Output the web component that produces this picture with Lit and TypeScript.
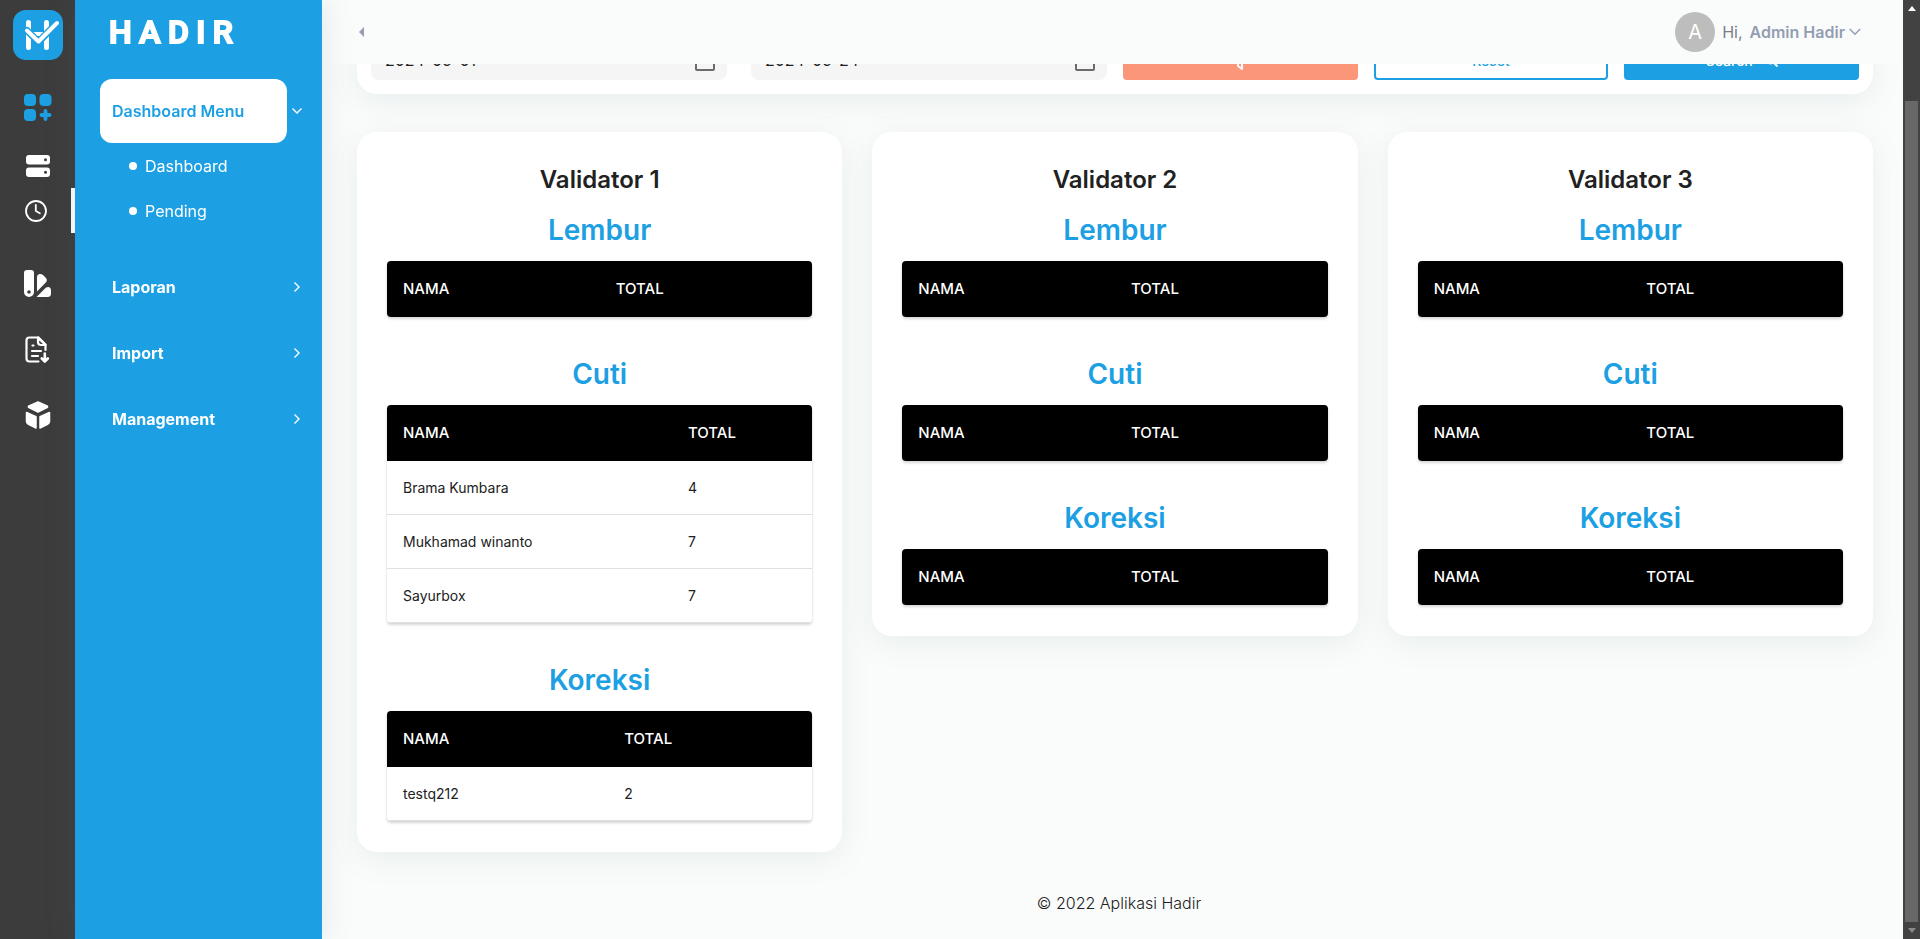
import { LitElement, html, css } from "lit";
import { customElement } from "lit/decorators.js";

interface Row { name: string; total: number }
interface Section { title: string; cols: string; rows: Row[] }

const even = "even";
const validators: { title: string; sections: Section[] }[] = [
  {
    title: "Validator 1",
    sections: [
      { title: "Lembur", cols: even, rows: [] },
      {
        title: "Cuti",
        cols: "wide",
        rows: [
          { name: "Brama Kumbara", total: 4 },
          { name: "Mukhamad winanto", total: 7 },
          { name: "Sayurbox", total: 7 },
        ],
      },
      { title: "Koreksi", cols: "medium", rows: [{ name: "testq212", total: 2 }] },
    ],
  },
  ...[2, 3].map((n) => ({
    title: `Validator ${n}`,
    sections: ["Lembur", "Cuti", "Koreksi"].map((title) => ({ title, cols: even, rows: [] as Row[] })),
  })),
];

@customElement("validator-card")
class ValidatorCard extends LitElement {
  static properties = { data: { attribute: false } };
  declare data: { title: string; sections: Section[] };

  static styles = css`
    :host {
      display: block;
      box-sizing: border-box;
      background: #fff;
      border-radius: 20px;
      padding: 30px 30px 31px;
      box-shadow: 0 7px 30px rgba(90, 114, 123, 0.11);
    }
    .title {
      margin: 0 0 16px;
      font-size: 24px;
      line-height: 35px;
      font-weight: 600;
      color: #212121;
      text-align: center;
    }
    .sections { display: flex; flex-direction: column; gap: 40px; }
    .name {
      margin: 0 0 14px;
      font-size: 28px;
      line-height: 34px;
      font-weight: 600;
      color: #1ca0e3;
      text-align: center;
    }
    table {
      width: 100%;
      table-layout: fixed;
      border-collapse: separate;
      border-spacing: 0;
      border-radius: 4px;
      overflow: hidden;
      box-shadow: 0 2px 3px rgba(0, 0, 0, 0.16), 0 0 1px rgba(0, 0, 0, 0.14);
    }
    th {
      box-sizing: border-box;
      background: #000;
      color: #fff;
      text-align: left;
      font-weight: 500;
      font-size: 15px;
      line-height: 24px;
      padding: 16px;
    }
    .even { width: 50%; }
    .wide { width: 67%; }
    .medium { width: 52%; }
    td {
      height: 54px;
      box-sizing: border-box;
      font-size: 14px;
      line-height: 20px;
      color: #212121;
      padding: 16px;
      border-bottom: 1px solid #e0e0e0;
    }
  `;

  render() {
    return html`
      <h2 class="title">${this.data.title}</h2>
      <div class="sections">
        ${this.data.sections.map(
          (s) => html`<section>
            <h3 class="name">${s.title}</h3>
            <table>
              <thead>
                <tr><th class=${s.cols} scope="col">NAMA</th><th scope="col">TOTAL</th></tr>
              </thead>
              <tbody>
                ${s.rows.map((r) => html`<tr><td>${r.name}</td><td>${r.total}</td></tr>`)}
              </tbody>
            </table>
          </section>`
        )}
      </div>
    `;
  }
}

const chevronRight = html`<svg width="8" height="12" viewBox="0 0 8 12" fill="none" stroke="#fff" stroke-width="1.4"><path d="M1.500 1.500 6 6l-4.500 4.500" /></svg>`;
const calendar = html`<svg width="24" height="24" viewBox="0 0 24 24" fill="#6b6b6b"><path d="M20 3h-1V1h-2v2H7V1H5v2H4c-1.100 0-2 .9-2 2v16c0 1.100.9 2 2 2h16c1.100 0 2-.9 2-2V5c0-1.100-.9-2-2-2zm0 18H4V8h16v13z" /></svg>`;

@customElement("app-root")
class AppRoot extends LitElement {
  static styles = css`
    :host {
      display: block;
      font-family: "Inter", "Liberation Sans", sans-serif;
      color: #212121;
    }
    a { color: inherit; text-decoration: none; }
    button { font: inherit; cursor: pointer; }
    svg { display: block; flex: none; }
    .app { display: flex; height: 100vh; overflow: hidden; background: #fafcfb; }
    .rail {
      width: 75px;
      flex: none;
      background: #3c3c3c;
      display: flex;
      flex-direction: column;
      align-items: center;
      padding-top: 10px;
      box-sizing: border-box;
    }
    .rail a { display: flex; width: 100%; align-items: center; justify-content: center; box-sizing: border-box; }
    .logo { height: 50px; margin-bottom: 14px; }
    .tall { height: 66px; }
    .first { margin-bottom: 3px; }
    .short { height: 45px; }
    .active { border-right: 4px solid #fff; margin-bottom: 17px; }
    .side {
      width: 247px;
      flex: none;
      box-sizing: border-box;
      background: #1ca0e3;
      color: #fff;
      padding: 12px 19px 0 25px;
      box-shadow: 0 0 30px rgba(90, 114, 123, 0.16);
      z-index: 3;
    }
    .brand {
      margin: 0 0 27px 9px;
      font-family: "Roboto", "Liberation Sans", sans-serif;
      font-size: 32px;
      line-height: 40px;
      font-weight: 500;
      -webkit-text-stroke: 2px #fff;
      stroke-linejoin: round;
      display: flex;
      justify-content: space-between;
      width: 124px;
    }
    .group { display: flex; align-items: center; justify-content: space-between; font-weight: 700; font-size: 16px; height: 66px; padding: 0 2px 0 12px; }
    .current { padding: 0; height: 64px; gap: 4px; }
    .pill {
      display: flex;
      align-items: center;
      flex: 1;
      height: 64px;
      border-radius: 12px;
      background: #fff;
      color: #1ca0e3;
      padding-left: 12px;
      font-weight: 600;
    }
    .sub { list-style: none; margin: 0 0 21px; padding: 0 0 0 29px; }
    .sub a { display: flex; align-items: center; gap: 8px; height: 45px; font-size: 16px; }
    .dot { width: 8px; height: 8px; border-radius: 50%; background: #fff; }
    .scroller { flex: 1; min-width: 0; overflow-y: auto; scrollbar-width: none; }
    .top {
      position: sticky;
      top: 0;
      z-index: 2;
      height: 64px;
      box-sizing: border-box;
      padding: 0 42px 0 36px;
      background: #fafcfb;
      display: flex;
      align-items: center;
      justify-content: space-between;
    }
    .plain { border: 0; background: none; padding: 0; color: #949db2; display: flex; align-items: center; }
    .user { font-size: 16px; gap: 7px; }
    .avatar {
      width: 40px;
      height: 40px;
      border-radius: 50%;
      background: #bdbdbd;
      color: #fff;
      font-size: 20px;
      line-height: 40px;
      text-align: center;
    }
    .hi { color: #777e89; }
    .who { display: flex; align-items: center; gap: 4px; font-weight: 600; }
    .content { padding: 59px 30px 0 35px; }
    .filter {
      display: grid;
      grid-template-columns: 1fr 1fr;
      gap: 16px;
      background: #fff;
      border-radius: 20px;
      padding: 14px;
      margin-bottom: 38px;
      box-shadow: 0 7px 30px rgba(90, 114, 123, 0.11);
    }
    .dates { display: grid; grid-template-columns: 1fr 1fr; gap: 24px; }
    .actions { display: grid; grid-template-columns: 1fr 1fr 1fr; gap: 16px; }
    .date { display: flex; align-items: center; background: #f5f5f5; border-radius: 8px; height: 40px; padding: 0 10px 0 14px; box-sizing: border-box; min-width: 0; }
    .date input { flex: 1; min-width: 0; border: 0; outline: 0; background: none; padding: 0; font: 16px "Inter", sans-serif; color: #212121; }
    .btn { height: 40px; border-radius: 4px; border: 2px solid #1ca0e3; background: #1ca0e3; color: #fff; font-size: 14px; font-weight: 500; display: flex; align-items: center; justify-content: center; gap: 12px; padding: 0; }
    .orange { background: #fb9778; border-color: #fb9778; }
    .outline { background: #fff; color: #1ca0e3; }
    .cards { display: grid; grid-template-columns: repeat(3, 1fr); gap: 30px; align-items: start; }
    footer { text-align: center; font-size: 16px; line-height: 24px; font-weight: 300; padding: 39px 0 24px 8px; }
    .bar { width: 17px; flex: none; box-sizing: border-box; background: #424242; display: flex; flex-direction: column; align-items: center; padding: 6px 0; z-index: 3; }
    .thumb { width: 13px; flex: 1; background: #686868; margin: 90px 0 6px; }
  `;

  firstUpdated() {
    this.updateComplete.then(() =>
      requestAnimationFrame(() => {
        const s = this.renderRoot.querySelector(".scroller")!;
        s.scrollTop = s.scrollHeight;
      })
    );
  }

  render() {
    return html`
      <div class="app">
        <nav class="rail" aria-label="Modules">
          <a class="logo" href="#home" aria-label="Hadir">
            <svg width="50" height="50" viewBox="0 0 50 50">
              <rect width="50" height="50" rx="13" fill="#1ca0e3" />
              <g fill="none" stroke-linecap="round" stroke-linejoin="round">
                <path d="M15.500 12.500v25M33.500 12.500v25" stroke="#fff" stroke-width="5" />
                <path d="M17 24h15" stroke="#fff" stroke-width="4" />
                <path d="M14 20.500 25.500 32 44 13" stroke="#1ca0e3" stroke-width="7" />
                <path d="M14 20.500 25.500 31.500 44 13" stroke="#fff" stroke-width="4" />
              </g>
            </svg>
          </a>
          <a class="tall first" href="#dashboard" aria-label="Dashboard">
            <svg width="28" height="28" viewBox="0 0 28 28" fill="#1ca0e3">
              <rect x="0" y="1" width="12" height="12" rx="4" /><rect x="15.500" y="1" width="12" height="12" rx="4" />
              <rect x="0" y="16" width="12" height="12" rx="4" />
              <path d="M21.500 18v8M17.500 22h8" stroke="#1ca0e3" stroke-width="3.800" stroke-linecap="round" />
            </svg>
          </a>
          <a class="short" href="#server" aria-label="Data">
            <svg width="24" height="22" viewBox="0 0 24 22" fill="#fff">
              <rect width="24" height="9.500" rx="3" /><rect y="12.500" width="24" height="9.500" rx="3" />
              <circle cx="19.500" cy="4.800" r="1.500" fill="#3c3c3c" /><circle cx="19.500" cy="17.200" r="1.500" fill="#3c3c3c" />
            </svg>
          </a>
          <a class="short active" href="#time" aria-label="Time">
            <svg width="22" height="22" viewBox="0 0 22 22" fill="none" stroke="#fff" stroke-width="1.800" stroke-linecap="round" stroke-linejoin="round">
              <circle cx="11" cy="11" r="10" /><path d="M10.800 4.800V11l4 2.200" />
            </svg>
          </a>
          <a class="tall" href="#report" aria-label="Laporan">
            <svg width="27" height="27" viewBox="0 0 27 27" fill="#fff">
              <path fill-rule="evenodd" d="M3 0h4q3 0 3 3v19a5 5 0 0 1-10 0V3q0-3 3-3zm2 20.200a1.800 1.800 0 1 0 0 3.600 1.800 1.800 0 0 0 0-3.600z" />
              <path d="M13 7q0-2.500 2.500-3 2-.3 3.500 1l3 3q1.800 2.500-.2 4.600L13 21.500zM12.500 27l9.500-9.500q4.500-1.500 5 2.500v3.500Q27 27 23.500 27z" />
            </svg>
          </a>
          <a class="tall" href="#import" aria-label="Import">
            <svg width="26" height="27" viewBox="0 0 26 27" fill="none" stroke="#fff" stroke-width="2.200" stroke-linecap="round" stroke-linejoin="round">
              <path d="M13.500 25.500H4.500q-3 0-3-3v-18q0-3 3-3h9l7 7V14" /><path d="M13 1.500V6q0 3 3 3h4.500z" /><path d="M7.500 9.500h1M7 15h9M7 20h6" />
              <path d="M19.800 17.500v7M16.800 22.500l3 3 3-3" stroke-width="2.600" />
            </svg>
          </a>
          <a class="tall" href="#management" aria-label="Management">
            <svg width="26" height="28" viewBox="0 0 26 28" fill="#fff" stroke="#fff" stroke-width="1.500" stroke-linejoin="round">
              <path d="M13 1 22.500 5.300v1L13 11 3.500 6.300v-1zM1.500 11.500 11 15.800V27L3 23q-1.500-1-1.500-2.500zM24.500 11.500 15 15.800V27l8-4q1.500-1 1.500-2.500z" />
            </svg>
          </a>
        </nav>
        <nav class="side" aria-label="Main menu">
          <div class="brand" aria-label="HADIR"><span>H</span><span>A</span><span>D</span><span>I</span><span>R</span></div>
          <a class="group current" href="#menu">
            <span class="pill">Dashboard Menu</span>
            <svg width="12" height="8" viewBox="0 0 12 8" fill="none" stroke="#fff" stroke-width="1.400"><path d="M1.500 1.500 6 6l4.500-4.500" /></svg>
          </a>
          <ul class="sub">
            <li><a href="#dash"><span class="dot"></span>Dashboard</a></li>
            <li><a href="#pending"><span class="dot"></span>Pending</a></li>
          </ul>
          <a class="group" href="#laporan">Laporan ${chevronRight}</a>
          <a class="group" href="#imports">Import ${chevronRight}</a>
          <a class="group" href="#manage">Management ${chevronRight}</a>
        </nav>
        <div class="scroller">
          <header class="top">
            <button class="plain" aria-label="Collapse menu"><svg width="6" height="10" viewBox="0 0 6 10" fill="#949db2"><path d="M6 0v10L1 5z" /></svg></button>
            <button class="plain user">
              <span class="avatar">A</span><span class="hi">Hi,</span>
              <span class="who">Admin Hadir
                <svg width="12" height="8" viewBox="0 0 12 8" fill="none" stroke="#949db2" stroke-width="1.500"><path d="M.8 1 6 6.300 11.200 1" /></svg>
              </span>
            </button>
          </header>
          <main class="content">
            <form class="filter" @submit=${(e: Event) => e.preventDefault()}>
              <div class="dates">
                <label class="date"><input type="text" aria-label="Start date" value="2024-09-01" />${calendar}</label>
                <label class="date"><input type="text" aria-label="End date" value="2024-09-24" />${calendar}</label>
              </div>
              <div class="actions">
                <button class="btn orange" type="button" aria-label="Filter">
                  <svg width="24" height="24" viewBox="0 0 24 24" fill="none" stroke="#fff" stroke-width="2" stroke-linejoin="round"><path d="M3 3h18l-7 9v9l-4-3v-6z" /></svg>
                </button>
                <button class="btn outline" type="reset">Reset</button>
                <button class="btn" type="submit">Search
                  <svg width="13" height="13" viewBox="0 0 13 13" fill="none" stroke="#fff" stroke-width="2"><circle cx="5.500" cy="5.500" r="4" /><path d="m8.500 8.500 4 4" /></svg>
                </button>
              </div>
            </form>
            <div class="cards">${validators.map((v) => html`<validator-card .data=${v}></validator-card>`)}</div>
            <footer>© 2022 Aplikasi Hadir</footer>
          </main>
        </div>
        <div class="bar" aria-hidden="true">
          <svg width="8" height="5" viewBox="0 0 8 5" fill="#fff"><path d="M4 0l4 5H0z" /></svg>
          <div class="thumb"></div>
          <svg width="8" height="5" viewBox="0 0 8 5" fill="#8a8a8a"><path d="M0 0h8L4 5z" /></svg>
        </div>
      </div>
    `;
  }
}
